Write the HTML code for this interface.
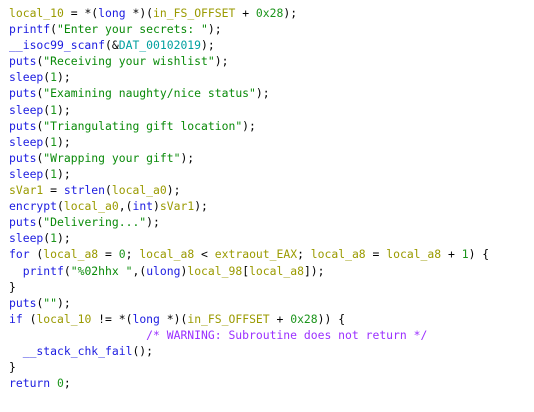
<!DOCTYPE html>
<html><head><style>
body{margin:0;background:#fff;width:534px;height:412px;overflow:hidden}
pre{margin:0;padding:5px 0 0 9px;font-family:"DejaVu Sans Mono","Liberation Mono",monospace;font-size:11.4px;line-height:16.1px;color:#000}
.f{color:#1c1ce0}.v{color:#9a9a00}.s{color:#098a09}.n{color:#1b941b}.d{color:#00a0a0}.c{color:#9b30ff}.k{color:#1c1ce0}
</style></head><body><pre><span class="v">local_10</span> = *(<span class="k">long</span> *)(<span class="v">in_FS_OFFSET</span> + <span class="n">0x28</span>);
<span class="f">printf</span>(<span class="s">"Enter your secrets: "</span>);
<span class="f">__isoc99_scanf</span>(&amp;<span class="d">DAT_00102019</span>);
<span class="f">puts</span>(<span class="s">"Receiving your wishlist"</span>);
<span class="f">sleep</span>(<span class="n">1</span>);
<span class="f">puts</span>(<span class="s">"Examining naughty/nice status"</span>);
<span class="f">sleep</span>(<span class="n">1</span>);
<span class="f">puts</span>(<span class="s">"Triangulating gift location"</span>);
<span class="f">sleep</span>(<span class="n">1</span>);
<span class="f">puts</span>(<span class="s">"Wrapping your gift"</span>);
<span class="f">sleep</span>(<span class="n">1</span>);
<span class="v">sVar1</span> = <span class="f">strlen</span>(<span class="v">local_a0</span>);
<span class="f">encrypt</span>(<span class="v">local_a0</span>,(<span class="k">int</span>)<span class="v">sVar1</span>);
<span class="f">puts</span>(<span class="s">"Delivering..."</span>);
<span class="f">sleep</span>(<span class="n">1</span>);
<span class="k">for</span> (<span class="v">local_a8</span> = <span class="n">0</span>; <span class="v">local_a8</span> &lt; <span class="v">extraout_EAX</span>; <span class="v">local_a8</span> = <span class="v">local_a8</span> + <span class="n">1</span>) {
  <span class="f">printf</span>(<span class="s">"%02hhx "</span>,(<span class="k">ulong</span>)<span class="v">local_98</span>[<span class="v">local_a8</span>]);
}
<span class="f">puts</span>(<span class="s">""</span>);
<span class="k">if</span> (<span class="v">local_10</span> != *(<span class="k">long</span> *)(<span class="v">in_FS_OFFSET</span> + <span class="n">0x28</span>)) {
                    <span class="c">/* WARNING: Subroutine does not return */</span>
  <span class="f">__stack_chk_fail</span>();
}
<span class="k">return</span> <span class="n">0</span>;
</pre></body></html>
